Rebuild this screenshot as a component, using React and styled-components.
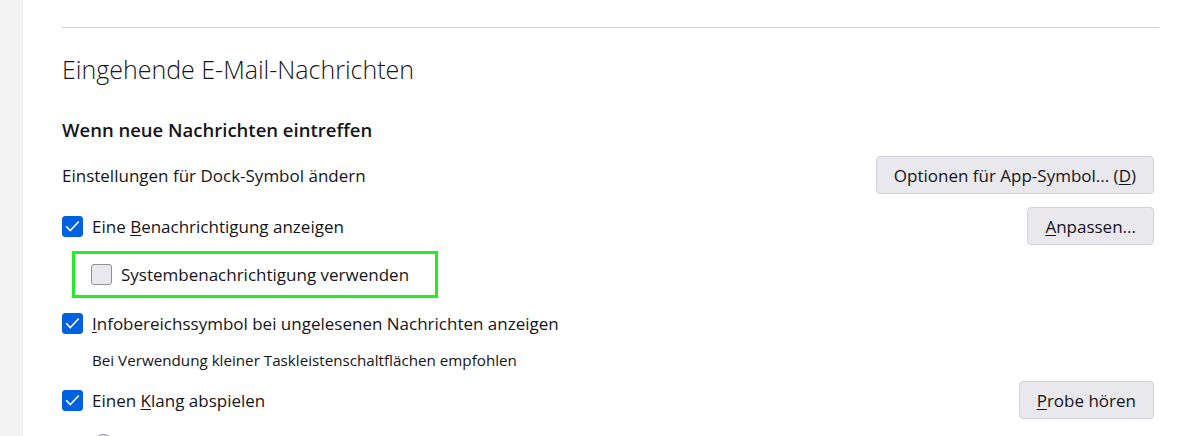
import React from "react";
import styled, { createGlobalStyle } from "styled-components";

const Global = createGlobalStyle`
  html, body { margin: 0; padding: 0; background: #ffffff; }
  body { font-family: "Open Sans", "Noto Sans", sans-serif; color: #15141a; }
`;

const Page = styled.div`
  display: flex;
  width: 1200px;
  height: 436px;
  overflow: hidden;
`;

const Sidebar = styled.div`
  width: 23px;
  flex: none;
  background: #f3f3f3;
`;

const Main = styled.div`
  flex: 1;
  padding: 27px 41px 0 39px;
`;

const Separator = styled.hr`
  margin: 0;
  border: none;
  border-top: 1px solid #d2d2d6;
`;

const Heading = styled.h1`
  margin: 23px 0 0;
  font-size: 25px;
  line-height: 36px;
  font-weight: 300;
`;

const SubHeading = styled.h2`
  margin: 31px 0 0;
  font-size: 18.5px;
  line-height: 24px;
  font-weight: 600;
`;

const Row = styled.div`
  display: flex;
  align-items: center;
  justify-content: space-between;
  height: 38px;
  margin-top: ${(p) => p.$gap}px;
  padding-left: ${(p) => p.$indent || 0}px;
  padding-right: 5px;
`;

const Label = styled.label`
  display: flex;
  align-items: center;
  gap: 9px;
  font-size: 17px;
`;

const Box = styled.span`
  width: 21px;
  height: 21px;
  box-sizing: border-box;
  border-radius: 3px;
  display: inline-flex;
  align-items: center;
  justify-content: center;
  background: ${(p) => (p.$checked ? "#0061e0" : "#e9e9ed")};
  border: 1px solid ${(p) => (p.$checked ? "#0061e0" : "#8f8f9d")};
`;

const Button = styled.button`
  font: inherit;
  font-size: 17px;
  color: #15141a;
  height: 38px;
  padding: 0 17px;
  border-radius: 4px;
  border: 1px solid #d2d2d6;
  background: #e9e9ed;
`;

const Highlight = styled.div`
  margin: 6px 0 0 10px;
  width: 366px;
  height: 47px;
  box-sizing: border-box;
  border: 3px solid #22ee22;
  display: flex;
  align-items: center;
  padding-left: 16px;
`;

const Note = styled.div`
  margin: 8px 0 0 30px;
  font-size: 15.2px;
  line-height: 20px;
`;

const Radio = styled.span`
  width: 21px;
  height: 21px;
  box-sizing: border-box;
  border-radius: 50%;
  border: 1px solid #8f8f9d;
  background: #e9e9ed;
`;

const Key = styled.u`
  text-underline-offset: 2px;
`;

function Check({ checked }) {
  return (
    <Box $checked={checked}>
      {checked && (
        <svg width="15" height="15" viewBox="0 0 14 14">
          <path d="M1.5 7.2 L5 10.8 L12.5 2.8" fill="none" stroke="#fff" strokeWidth="1.5" strokeLinecap="round" strokeLinejoin="round" />
        </svg>
      )}
    </Box>
  );
}

export default function App() {
  return (
    <>
      <Global />
      <Page>
        <Sidebar />
        <Main>
          <Separator />
          <Heading>Eingehende E-Mail-Nachrichten</Heading>
          <SubHeading>Wenn neue Nachrichten eintreffen</SubHeading>
          <Row $gap={14}>
            <Label as="span">Einstellungen für Dock-Symbol ändern</Label>
            <Button>Optionen für App-Symbol... (<Key>D</Key>)</Button>
          </Row>
          <Row $gap={13}>
            <Label>
              <Check checked />
              <span>Eine <Key>B</Key>enachrichtigung anzeigen</span>
            </Label>
            <Button><Key>A</Key>npassen...</Button>
          </Row>
          <Highlight>
            <Label>
              <Check checked={false} />
              <span>Systembenachrichtigung verwenden</span>
            </Label>
          </Highlight>
          <Row $gap={6}>
            <Label>
              <Check checked />
              <span><Key>I</Key>nfobereichssymbol bei ungelesenen Nachrichten anzeigen</span>
            </Label>
          </Row>
          <Note>Bei Verwendung kleiner Taskleistenschaltflächen empfohlen</Note>
          <Row $gap={11}>
            <Label>
              <Check checked />
              <span>Einen <Key>K</Key>lang abspielen</span>
            </Label>
            <Button><Key>P</Key>robe hören</Button>
          </Row>
          <Row $gap={6} $indent={31}>
            <Radio />
          </Row>
        </Main>
      </Page>
    </>
  );
}
